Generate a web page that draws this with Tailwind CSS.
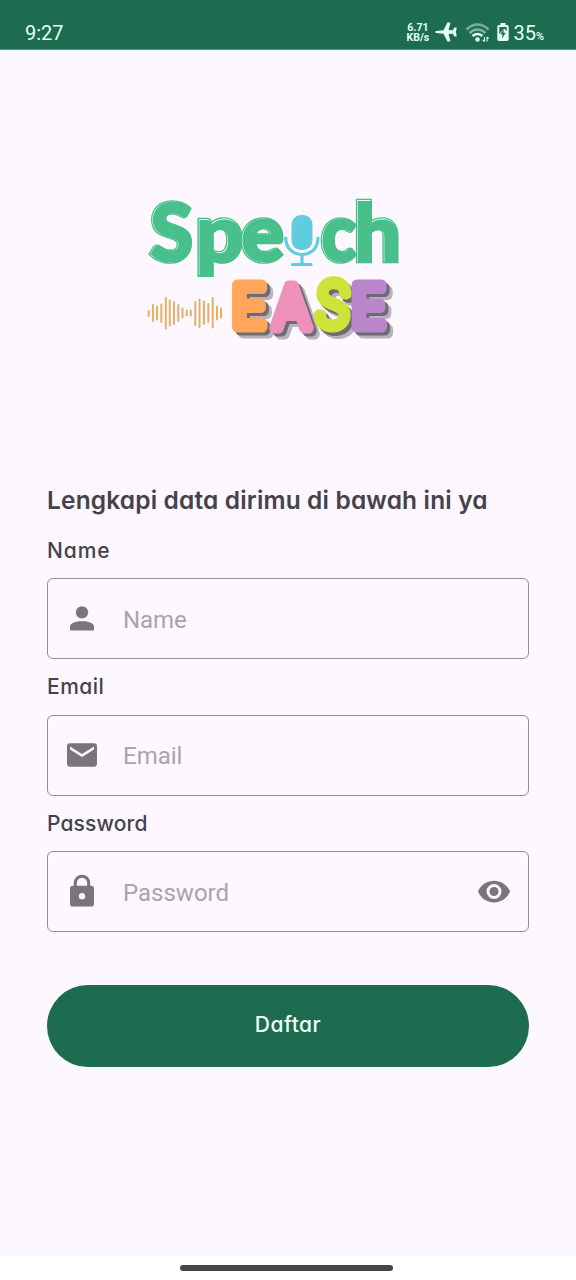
<!DOCTYPE html>
<html lang="id">
<head>
<meta charset="utf-8">
<title>SpeechEase</title>
<script src="https://cdn.jsdelivr.net/npm/@tailwindcss/browser@4"></script>
</head>
<body class="w-[576px] h-[1280px] overflow-hidden bg-[#fdf7ff] font-['Roboto',sans-serif] flex flex-col">
<header class="h-[50px] shrink-0 bg-[#1d6c50] border-b border-[#5a9080] text-[#e4fff4] flex items-end pl-[25px] pr-8">
  <span class="text-[20px] leading-[32px] h-8">9:27</span>
  <div class="ml-auto flex items-center h-8">
    <div class="w-[23px] text-[10.5px] leading-[10px] font-bold text-center whitespace-nowrap">6.71<br>KB/s</div>
    <svg class="ml-[5px] w-[24px] h-[24px]" viewBox="0 0 24 24" fill="currentColor"><path d="M1 11 2 9.900 9.500 9.300 13.500 1.500H16.500L14.500 9.100 18.800 9.200 20.500 6.500H22.700L22 11 22.700 15.500H20.500L18.800 12.800 14.500 12.900 16.500 20.500H13.500L9.500 12.700 2 12.100Z"/></svg>
    <svg class="ml-[7px] w-[25px] h-[24px]" viewBox="0 0 25 24" fill="none" stroke="currentColor" stroke-width="2.600"><g opacity=".45"><path d="M1.500 8.500Q12.500-1.500 23.500 8.500"/></g><path opacity=".5" d="M4.500 12Q12.500 5 20.500 12"/><path d="M7.500 15Q12.500 11 17.500 15"/><circle cx="12.500" cy="18.500" r="2.300" fill="currentColor" stroke="none"/><path stroke-width="1.100" d="M19.500 16V20.500M22 20.500V16M17.800 18.800 19.500 20.500M23.700 17.700 22 16"/></svg>
    <svg class="ml-[7px] w-[12px] h-[22px]" viewBox="0 0 12 22"><path fill="currentColor" d="M3.500 1H8.500V3H10Q11.700 3 11.700 4.700V17.300Q11.700 19 10 19H2Q.3 19 .3 17.300V4.700Q.3 3 2 3H3.500Z"/><path fill="#1d6c50" d="M2.300 5H9.700V9L7 6.500 2.300 12ZM6.700 7 3.300 12.200H5.500L5 16.500 8.800 10.800H6.500Z"/></svg>
    <span class="ml-[4px] text-[20px]">35<span class="text-[11px] font-medium">%</span></span>
  </div>
</header>

<main class="flex-1 flex flex-col px-[47px]">
  <div class="pt-[140px] pl-[93px] h-[429px]">
    <svg class="w-[270px] h-[160px]" viewBox="140 190 270 160" role="img" aria-label="Speech Ease">
      <defs>
        <g id="speech" font-family="Lato" font-weight="900" font-size="80">
          <text y="260.500" x="149.500" textLength="43" lengthAdjust="spacingAndGlyphs">S</text>
          <text y="261" x="195" textLength="48" lengthAdjust="spacingAndGlyphs">p</text>
          <text y="260.500" x="240.500" textLength="43" lengthAdjust="spacingAndGlyphs">e</text>
          <text y="260.500" x="320.500" textLength="35" lengthAdjust="spacingAndGlyphs">c</text>
          <text y="261" x="353.500" textLength="47" lengthAdjust="spacingAndGlyphs">h</text>
        </g>
        <g id="ease" font-family="Inter" stroke-linejoin="round">
          <text y="326.500" x="232" textLength="34" lengthAdjust="spacingAndGlyphs" font-weight="300" font-size="58" stroke-width="11">E</text>
          <text y="327.500" x="273" textLength="37" lengthAdjust="spacingAndGlyphs" font-weight="300" font-size="57" stroke-width="11">A</text>
          <text y="326.500" x="315.500" textLength="35" lengthAdjust="spacingAndGlyphs" font-weight="200" font-size="61" stroke-width="10.500" transform="rotate(4 333 304)">S</text>
          <text y="326.500" x="351.500" textLength="34" lengthAdjust="spacingAndGlyphs" font-weight="300" font-size="58" stroke-width="11">E</text>
        </g>
      </defs>
      <use href="#speech" fill="#49bf8b" stroke="#49bf8b" stroke-width="4.500"/>
      <use href="#speech" fill="#e9fff6" stroke="#e9fff6" stroke-width="1.800"/>
      <use href="#speech" x=".8" y=".8" fill="#49bf8b" stroke="#49bf8b" stroke-width="2.200"/>
      <rect x="291.500" y="215" width="21" height="35" rx="9.500" fill="#60ccdf"/>
      <g fill="none" stroke="#60ccdf" stroke-width="3.200" stroke-linecap="round"><path d="M285.700 238C286 260 318 260 318 238M302 255V264M292.500 264.500H311"/></g>
      <path stroke="#e3ad62" stroke-width="1.900" stroke-linecap="round" d="M148.700 311V316M153 305V321M157 306.500V319.500M161.300 304.500V322M165.800 298V328.500M169.800 300.500V325.500M174 302V324M178.300 305V321M182.500 308.500V317.500M186.700 310.500V315.500M190.800 310.500V315.500M195.300 302V325M199.600 299.500V327M204 301.500V324M208.300 304V322M212.700 298V327.500M217 306.500V319.500M221 308.500V317.500"/>
      <use href="#ease" x="6" y="6.500" fill="#b8b3bb" stroke="#b8b3bb"/>
      <use href="#ease" x="3" y="3.500" fill="#706b73" stroke="#706b73"/>
      <g font-family="Inter" stroke-linejoin="round">
        <text y="326.500" x="232" textLength="34" lengthAdjust="spacingAndGlyphs" font-weight="300" font-size="58" stroke-width="11" fill="#ffa65b" stroke="#ffa65b">E</text>
        <text y="327.500" x="273" textLength="37" lengthAdjust="spacingAndGlyphs" font-weight="300" font-size="57" stroke-width="11" fill="#eb91ba" stroke="#eb91ba">A</text>
        <text y="326.500" x="315.500" textLength="35" lengthAdjust="spacingAndGlyphs" font-weight="200" font-size="61" stroke-width="10.500" transform="rotate(4 333 304)" fill="#cee338" stroke="#cee338">S</text>
        <text y="326.500" x="351.500" textLength="34" lengthAdjust="spacingAndGlyphs" font-weight="300" font-size="58" stroke-width="11" fill="#b985cb" stroke="#b985cb">E</text>
      </g>
    </svg>
  </div>

  <form class="flex flex-col font-['Inter',sans-serif] [font-feature-settings:'cv11'] text-[#47414b]">
    <h1 class="h-[44px] leading-[43px] text-[24.500px] font-semibold tracking-[0.15px] whitespace-nowrap">Lengkapi data dirimu di bawah ini ya</h1>
    <label class="h-[55px] leading-[55px] text-[21px] font-medium tracking-[0.9px]"><span>Name</span></label>
    <div class="h-[81px] rounded-[6px] border border-[#958e98] flex items-center pl-[14px] pr-[14px]">
      <svg class="size-[40px]" viewBox="0 0 24 24" fill="#7b747e"><circle cx="12" cy="8" r="3.700"/><path d="M4.800 18.900V16.500C4.800 12.200 19.200 12.200 19.200 16.500V18.900Z"/></svg>
      <span class="ml-[21px] pt-[3px] font-['Roboto'] text-[24px] tracking-[-0.1px] text-[#aaa3ad]">Name</span>
    </div>
    <label class="h-[55.500px] leading-[55px] text-[21px] font-medium tracking-[0.5px]"><span>Email</span></label>
    <div class="h-[81px] rounded-[6px] border border-[#958e98] flex items-center pl-[14px] pr-[14px]">
      <svg class="size-[40px]" viewBox="0 0 24 24" fill="#7b747e"><path fill-rule="evenodd" d="M4.700 5H19.300Q21 5 21 6.700V17.300Q21 19 19.300 19H4.700Q3 19 3 17.300V6.700Q3 5 4.700 5ZM4.800 6.900V8.700L12 13.200 19.200 8.700V6.900L12 11.400Z"/></svg>
      <span class="ml-[21px] pt-[2px] font-['Roboto'] text-[24px] text-[#aaa3ad]">Email</span>
    </div>
    <label class="h-[55.500px] leading-[55px] text-[21px] font-medium tracking-[0.15px]"><span>Password</span></label>
    <div class="h-[81px] rounded-[6px] border border-[#958e98] flex items-center pl-[14px] pr-[14px]">
      <svg class="size-[40px]" viewBox="0 0 24 24" fill="#7b747e"><path fill-rule="evenodd" transform="translate(0 -.5)" d="M7.100 8.700V7A4.900 4.900 0 0 1 16.900 7V8.700H17.500Q19.200 8.700 19.200 10.400V19.500Q19.200 21.200 17.500 21.200H6.500Q4.800 21.200 4.800 19.500V10.400Q4.800 8.700 6.500 8.700ZM8.900 8.700H15.100V7A3.100 3.100 0 0 0 8.900 7ZM12 13.100A1.900 1.900 0 1 0 12 16.900 1.900 1.900 0 1 0 12 13.100Z"/></svg>
      <span class="ml-[21px] pt-[3px] font-['Roboto'] text-[24px] text-[#aaa3ad]">Password</span>
      <svg class="ml-auto size-[40px]" viewBox="0 0 40 40" fill="#7b747e"><path fill-rule="evenodd" d="M4 19.500C10 5 30 5 36 19.500 30 34 10 34 4 19.500ZM20 12A7.500 7.500 0 1 0 20 27 7.500 7.500 0 1 0 20 12Z"/><circle cx="20" cy="19.500" r="4.500"/></svg>
    </div>
    <button type="button" class="mt-[53px] h-[82px] rounded-full bg-[#1d6c50] text-[#f3fff9] text-[21px] font-medium tracking-[0.5px] pb-[3px]">Daftar</button>
  </form>
</main>
<footer class="h-[24px] shrink-0 bg-white pt-[9px] pl-[180px]"><div class="w-[213px] h-[6px] rounded-full bg-[#464646]"></div></footer>
</body>
</html>
